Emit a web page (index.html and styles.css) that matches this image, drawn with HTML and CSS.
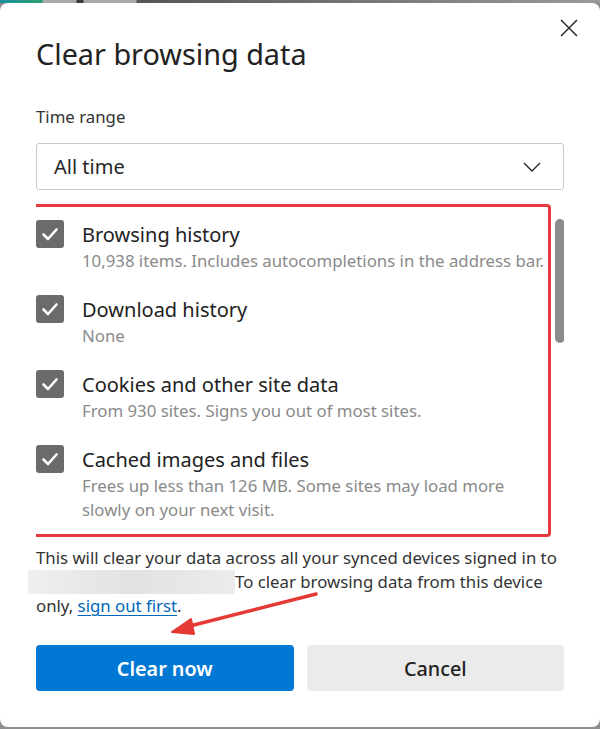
FILE: index.html
```html
<!DOCTYPE html>
<html lang="en">
<head>
    <meta charset="UTF-8">
    <title>Clear browsing data</title>
    <link rel="stylesheet" href="styles.css">
</head>
<body>
    <div class="backdrop-strip"></div>

    <div class="dialog">
        <!-- Header -->
        <div class="dialog-header">
            <h1>Clear browsing data</h1>
            <button class="dialog-close" aria-label="Close">
                <svg width="20" height="20" viewBox="0 0 20 20">
                    <path d="M2 2 L18 18 M18 2 L2 18" stroke="#2b2b2b" stroke-width="1.5" fill="none"/>
                </svg>
            </button>
        </div>

        <!-- Time range -->
        <div class="field-label">Time range</div>
        <div class="select-box">
            <span>All time</span>
            <svg class="chevron" width="18" height="10" viewBox="0 0 18 10">
                <path d="M1 1 L9 9 L17 1" stroke="#2b2b2b" stroke-width="1.4" fill="none"/>
            </svg>
        </div>

        <!-- Data types -->
        <div class="data-list">
            <div class="data-item">
                <span class="checkbox">
                    <svg width="28" height="28" viewBox="0 0 28 28"><path d="M7.5 14.5 L12 19 L20.5 9.5" stroke="#fff" stroke-width="2.6" fill="none" stroke-linecap="round" stroke-linejoin="round"/></svg>
                </span>
                <div class="item-text">
                    <div class="item-title">Browsing history</div>
                    <div class="item-desc">10,938 items. Includes autocompletions in the address bar.</div>
                </div>
            </div>
            <div class="data-item">
                <span class="checkbox">
                    <svg width="28" height="28" viewBox="0 0 28 28"><path d="M7.5 14.5 L12 19 L20.5 9.5" stroke="#fff" stroke-width="2.6" fill="none" stroke-linecap="round" stroke-linejoin="round"/></svg>
                </span>
                <div class="item-text">
                    <div class="item-title">Download history</div>
                    <div class="item-desc">None</div>
                </div>
            </div>
            <div class="data-item">
                <span class="checkbox">
                    <svg width="28" height="28" viewBox="0 0 28 28"><path d="M7.5 14.5 L12 19 L20.5 9.5" stroke="#fff" stroke-width="2.6" fill="none" stroke-linecap="round" stroke-linejoin="round"/></svg>
                </span>
                <div class="item-text">
                    <div class="item-title">Cookies and other site data</div>
                    <div class="item-desc">From 930 sites. Signs you out of most sites.</div>
                </div>
            </div>
            <div class="data-item">
                <span class="checkbox">
                    <svg width="28" height="28" viewBox="0 0 28 28"><path d="M7.5 14.5 L12 19 L20.5 9.5" stroke="#fff" stroke-width="2.6" fill="none" stroke-linecap="round" stroke-linejoin="round"/></svg>
                </span>
                <div class="item-text">
                    <div class="item-title">Cached images and files</div>
                    <div class="item-desc">Frees up less than 126 MB. Some sites may load more slowly on your next visit.</div>
                </div>
            </div>
            <div class="scroll-thumb"></div>
            <div class="highlight-box"></div>
        </div>

        <!-- Sync notice -->
        <p class="sync-note">
            This will clear your data across all your synced devices signed in to
            <span class="redacted"></span>To clear browsing data from this device
            only, <a href="#">sign out first</a>.
        </p>

        <!-- Footer -->
        <div class="dialog-actions">
            <button class="btn btn-primary">Clear now</button>
            <button class="btn btn-secondary">Cancel</button>
        </div>

        <!-- annotation arrow -->
        <svg class="annotation-arrow" width="600" height="729" viewBox="0 0 600 729">
            <path d="M316 594 L186 627" stroke="#e53935" stroke-width="3.5" stroke-linecap="round"/>
            <path d="M172 632 L191 619 L194 634 Z" fill="#e53935" stroke="#e53935" stroke-width="2" stroke-linejoin="round"/>
        </svg>
    </div>
</body>
</html>
```

FILE: styles.css
```css
* {
    box-sizing: border-box;
    margin: 0;
    padding: 0;
}

body {
    background: #8e8e8e;
    font-family: 'Noto Sans', 'Open Sans', sans-serif;
    color: #262626;
    width: 600px;
    height: 729px;
    overflow: hidden;
    position: relative;
}

.backdrop-strip {
    height: 3px;
    background: linear-gradient(to right, #1e8fa0 0, #2aa06a 42px, #a8a8a8 43px, #a8a8a8 76px, #3a3a3a 77px, #3a3a3a 83px, #a8a8a8 84px, #a8a8a8 136px, #555 137px, #9a9a9a 100%);
}

.dialog {
    position: relative;
    background: #fff;
    border-radius: 8px;
    height: 724px;
    padding: 0 36px;
}

/* header */
.dialog-header {
    padding-top: 33px;
    position: relative;
}

.dialog-header h1 {
    font-size: 28.8px;
    font-weight: 400;
    line-height: 36px;
    color: #222;
}

.dialog-close {
    position: absolute;
    top: 15px;
    right: -15px;
    background: none;
    border: none;
    width: 20px;
    height: 20px;
}

/* time range */
.field-label {
    margin-top: 33px;
    font-size: 16.8px;
    line-height: 24px;
    color: #333;
}

.select-box {
    margin-top: 14px;
    height: 47px;
    border: 1px solid #c9c9c9;
    border-radius: 3px;
    display: flex;
    align-items: center;
    justify-content: space-between;
    padding: 0 22px 0 17px;
    font-size: 20px;
    color: #262626;
}

/* list */
.data-list {
    position: relative;
    margin-top: 14px;
    height: 333px;
    padding: 16px 16px 0 0;
    overflow: hidden;
}

.data-item {
    display: flex;
    gap: 18px;
    margin-bottom: 22px;
}

.checkbox {
    flex: none;
    width: 28px;
    height: 28px;
    border-radius: 3px;
    background: #6b6b6b;
    display: flex;
}

.item-text {
    padding-top: 1px;
}

.item-title {
    font-size: 20px;
    line-height: 28px;
    color: #222;
}

.item-desc {
    font-size: 16.8px;
    line-height: 24px;
    color: #8a8a8a;
}

.scroll-thumb {
    position: absolute;
    right: -1px;
    top: 15px;
    width: 10px;
    height: 124px;
    border-radius: 5px;
    background: #8c8c8c;
}

.highlight-box {
    position: absolute;
    left: -14px;
    top: 0;
    width: 529px;
    height: 333px;
    border: 3px solid #e8393e;
    border-radius: 4px;
}

/* sync notice */
.sync-note {
    margin-top: 9px;
    font-size: 16.8px;
    line-height: 24px;
    color: #333;
}

.redacted {
    display: inline-block;
    vertical-align: top;
    width: 207px;
    height: 24px;
    margin-left: -8px;
    background: linear-gradient(to right, #efefef, #e2e2e2 50%, #ececec);
}

.sync-note a {
    color: #0067b8;
    text-decoration: underline;
    text-underline-offset: 3px;
    text-decoration-thickness: 1px;
}

/* footer */
.dialog-actions {
    margin-top: 27px;
    display: flex;
    gap: 13px;
}

.btn {
    flex: 1;
    height: 46px;
    border: none;
    border-radius: 4px;
    font-family: inherit;
    font-size: 19.8px;
}

.btn-primary {
    background: #0078d4;
    color: #fff;
    font-weight: 600;
}

.btn-secondary {
    background: #ebebeb;
    color: #222;
    font-weight: 500;
}

.annotation-arrow {
    position: absolute;
    left: 0;
    top: -3px;
    pointer-events: none;
}
```
